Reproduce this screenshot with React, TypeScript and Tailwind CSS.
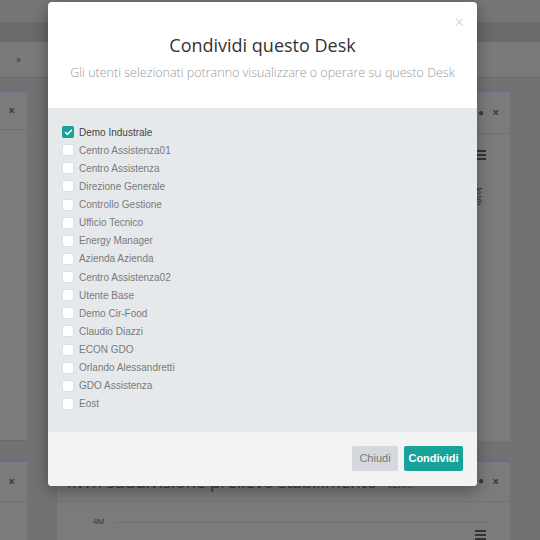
import { Check } from "lucide-react";

const users = [
  { name: "Demo Industrale", checked: true },
  { name: "Centro Assistenza01", checked: false },
  { name: "Centro Assistenza", checked: false },
  { name: "Direzione Generale", checked: false },
  { name: "Controllo Gestione", checked: false },
  { name: "Ufficio Tecnico", checked: false },
  { name: "Energy Manager", checked: false },
  { name: "Azienda Azienda", checked: false },
  { name: "Centro Assistenza02", checked: false },
  { name: "Utente Base", checked: false },
  { name: "Demo Cir-Food", checked: false },
  { name: "Claudio Diazzi", checked: false },
  { name: "ECON GDO", checked: false },
  { name: "Orlando Alessandretti", checked: false },
  { name: "GDO Assistenza", checked: false },
  { name: "Eost", checked: false },
];

function Hamburger() {
  return (
    <div className="flex flex-col gap-[2px] w-[11px]">
      <div className="h-[2px] bg-[#333]"></div>
      <div className="h-[2px] bg-[#333]"></div>
      <div className="h-[2px] bg-[#333]"></div>
    </div>
  );
}

export default function App() {
  return (
    <div className="relative w-[540px] h-[540px] overflow-hidden bg-[#727272] font-['Open_Sans',sans-serif]">
      {/* dashboard behind the dimmed backdrop */}
      <div className="flex flex-col h-full">
        <div className="h-[22px] bg-[#767676]"></div>
        <div className="h-[20px] bg-[#6a6a6a]"></div>
        <div className="h-[36px] bg-[#7a7a7a] border-b border-[#6c6c6c] flex items-center px-[16px] text-[10px] text-[#3a3a3a]">
          »
        </div>
        <div className="h-[12px]"></div>
        <div className="flex h-[354px] gap-[30px] -ml-[3px]">
          <div className="w-[30px] shrink-0 bg-[#7b7b7b] border-t-[3px] border-[#6f6b8c] border-b border-b-[#6a6a6a]">
            <div className="h-[38px] border-b border-[#717171] flex items-center justify-end pr-[12px] text-[12px] text-[#3c3c3c] font-bold">
              ×
            </div>
          </div>
          <div className="w-[453px] shrink-0 bg-[#7b7b7b] border-t-[3px] border-[#6f6b8c] flex flex-col">
            <div className="h-[42px] border-b border-[#717171] flex items-center justify-end gap-[8px] pr-[11px] text-[12px] text-[#3c3c3c] font-bold">
              <span className="text-[10px]">●</span>
              <span>×</span>
            </div>
            <div className="flex justify-end pr-[24px] pt-[16px]">
              <Hamburger />
            </div>
            <div className="flex justify-end pr-[24px] pt-[30px]">
              <span className="rotate-90 text-[9px] text-[#333] font-['Liberation_Sans',sans-serif]">kWh</span>
            </div>
          </div>
          <div className="w-[30px] shrink-0 bg-[#7b7b7b] border-t-[3px] border-[#6f6b8c]"></div>
        </div>
        <div className="h-[18px]"></div>
        <div className="flex flex-1 gap-[30px] -ml-[3px]">
          <div className="w-[30px] shrink-0 bg-[#7b7b7b] border-t-[3px] border-[#6f6b8c]">
            <div className="h-[40px] border-b border-[#717171] flex items-center justify-end pr-[12px] text-[12px] text-[#3c3c3c] font-bold">
              ×
            </div>
          </div>
          <div className="w-[453px] shrink-0 bg-[#7b7b7b] border-t-[3px] border-[#6f6b8c] flex flex-col">
            <div className="h-[40px] border-b border-[#717171] flex items-center justify-between pl-[10px] pr-[11px] text-[#3a3a3a]">
              <span className="text-[17px] whitespace-nowrap">
                kWh suddivisione prelievo stabilimento <span className="text-[11px]">- ten...</span>
              </span>
              <span className="flex gap-[8px] text-[12px] font-bold">
                <span className="text-[10px]">●</span>
                <span>×</span>
              </span>
            </div>
            <div className="flex items-center pl-[36px] pr-[24px] pt-[14px] gap-[12px]">
              <span className="text-[8px] text-[#333] font-['Liberation_Sans',sans-serif]">4M</span>
              <div className="flex-1 h-px bg-[#6e6e6e]"></div>
            </div>
            <div className="flex justify-end pr-[24px] pt-[2px]">
              <Hamburger />
            </div>
          </div>
          <div className="w-[30px] shrink-0 bg-[#7b7b7b] border-t-[3px] border-[#6f6b8c]"></div>
        </div>
      </div>

      {/* share modal */}
      <div className="absolute left-[48px] top-[2px] w-[429px] h-[484px] rounded-[4px] overflow-hidden bg-white shadow-[0_4px_16px_rgba(0,0,0,0.35)] flex flex-col">
        <div className="relative h-[106px] shrink-0 flex flex-col items-center pt-[31px]">
          <span className="absolute right-[13px] top-[8px] text-[16px] text-[#c8c8c8] font-light">×</span>
          <h2 className="text-[18px] leading-[24px] text-[#333]">Condividi questo Desk</h2>
          <p className="mt-[6px] text-[12.5px] leading-[20px] text-[#9a9a9a] font-light">
            Gli utenti selezionati potranno visualizzare o operare su questo Desk
          </p>
        </div>
        <div className="h-[324px] shrink-0 bg-[#e6e9ec] pt-[15px] pl-[14px] font-['Liberation_Sans',sans-serif]">
          {users.map((u) => (
            <div key={u.name} className="flex items-center h-[18.13px] gap-[5px]">
              {u.checked ? (
                <div className="w-[12px] h-[12px] rounded-[2px] bg-[#17a39a] flex items-center justify-center">
                  <Check className="w-[9px] h-[9px] text-white" strokeWidth={4} />
                </div>
              ) : (
                <div className="w-[12px] h-[12px] rounded-[2px] bg-white border border-[#dde0e3]"></div>
              )}
              <span className={`text-[10px] ${u.checked ? "text-[#444]" : "text-[#7a7a7a]"}`}>{u.name}</span>
            </div>
          ))}
        </div>
        <div className="flex-1 bg-[#f3f3f4] flex justify-end items-start pt-[14px] pr-[14px] gap-[6px] font-['Liberation_Sans',sans-serif]">
          <button className="w-[46px] h-[25px] bg-[#d5d9dd] text-[#777] text-[11px] rounded-[2px]">Chiudi</button>
          <button className="w-[59px] h-[25px] bg-[#17a39a] text-white text-[11px] font-bold rounded-[2px]">Condividi</button>
        </div>
      </div>
    </div>
  );
}
